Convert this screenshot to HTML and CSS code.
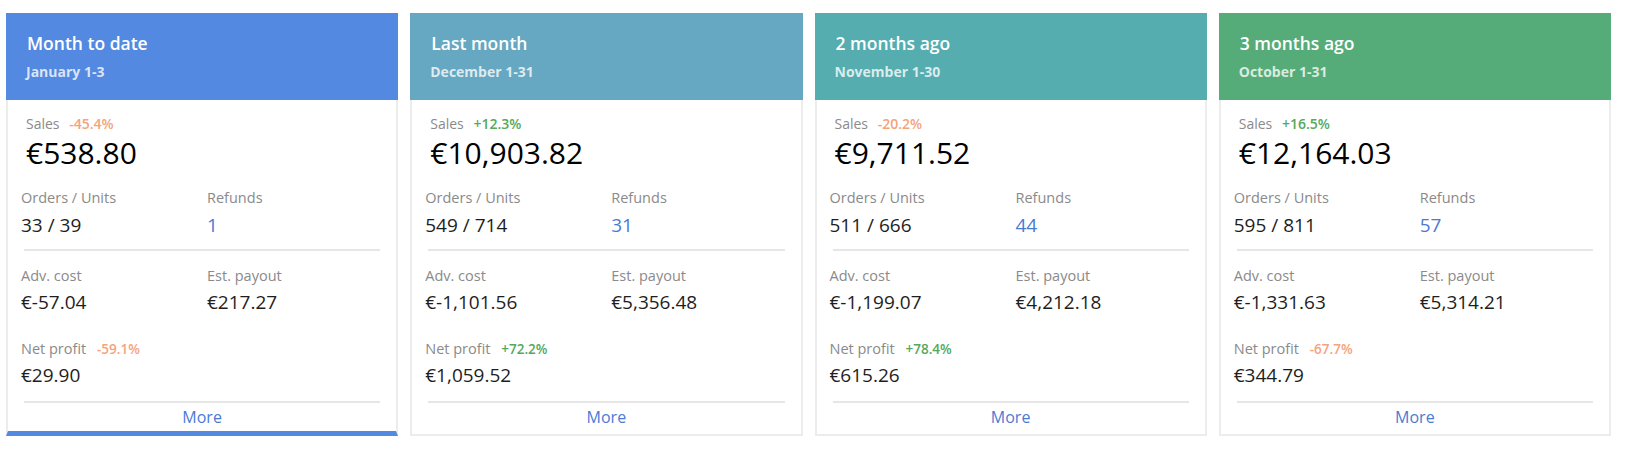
FILE: index.html
```html
<!DOCTYPE html>
<html>
<head>
<meta charset="utf-8">
<link rel="stylesheet" href="styles.css">
</head>
<body>
<div class="cards">
  <div class="card active">
    <div class="head h1">
      <div class="title">Month to date</div>
      <div class="sub">January 1-3</div>
    </div>
    <div class="body">
      <div class="sales">
        <div class="lbl">Sales <span class="chg neg">-45.4%</span></div>
        <div class="big">€538.80</div>
      </div>
      <div class="grid sep first">
        <div><div class="lbl">Orders / Units</div><div class="val">33 / 39</div></div>
        <div><div class="lbl">Refunds</div><div class="val link">1</div></div>
      </div>
      <div class="grid sep second">
        <div><div class="lbl">Adv. cost</div><div class="val">€-57.04</div></div>
        <div><div class="lbl">Est. payout</div><div class="val">€217.27</div></div>
        <div class="net"><div class="lbl">Net profit <span class="chg small neg">-59.1%</span></div><div class="val">€29.90</div></div>
      </div>
      <div class="more">More</div>
    </div>
  </div>
  <div class="card">
    <div class="head h2">
      <div class="title">Last month</div>
      <div class="sub">December 1-31</div>
    </div>
    <div class="body">
      <div class="sales">
        <div class="lbl">Sales <span class="chg pos">+12.3%</span></div>
        <div class="big">€10,903.82</div>
      </div>
      <div class="grid sep first">
        <div><div class="lbl">Orders / Units</div><div class="val">549 / 714</div></div>
        <div><div class="lbl">Refunds</div><div class="val link">31</div></div>
      </div>
      <div class="grid sep second">
        <div><div class="lbl">Adv. cost</div><div class="val">€-1,101.56</div></div>
        <div><div class="lbl">Est. payout</div><div class="val">€5,356.48</div></div>
        <div class="net"><div class="lbl">Net profit <span class="chg small pos">+72.2%</span></div><div class="val">€1,059.52</div></div>
      </div>
      <div class="more">More</div>
    </div>
  </div>
  <div class="card">
    <div class="head h3">
      <div class="title">2 months ago</div>
      <div class="sub">November 1-30</div>
    </div>
    <div class="body">
      <div class="sales">
        <div class="lbl">Sales <span class="chg neg">-20.2%</span></div>
        <div class="big">€9,711.52</div>
      </div>
      <div class="grid sep first">
        <div><div class="lbl">Orders / Units</div><div class="val">511 / 666</div></div>
        <div><div class="lbl">Refunds</div><div class="val link">44</div></div>
      </div>
      <div class="grid sep second">
        <div><div class="lbl">Adv. cost</div><div class="val">€-1,199.07</div></div>
        <div><div class="lbl">Est. payout</div><div class="val">€4,212.18</div></div>
        <div class="net"><div class="lbl">Net profit <span class="chg small pos">+78.4%</span></div><div class="val">€615.26</div></div>
      </div>
      <div class="more">More</div>
    </div>
  </div>
  <div class="card">
    <div class="head h4">
      <div class="title">3 months ago</div>
      <div class="sub">October 1-31</div>
    </div>
    <div class="body">
      <div class="sales">
        <div class="lbl">Sales <span class="chg pos">+16.5%</span></div>
        <div class="big">€12,164.03</div>
      </div>
      <div class="grid sep first">
        <div><div class="lbl">Orders / Units</div><div class="val">595 / 811</div></div>
        <div><div class="lbl">Refunds</div><div class="val link">57</div></div>
      </div>
      <div class="grid sep second">
        <div><div class="lbl">Adv. cost</div><div class="val">€-1,331.63</div></div>
        <div><div class="lbl">Est. payout</div><div class="val">€5,314.21</div></div>
        <div class="net"><div class="lbl">Net profit <span class="chg small neg">-67.7%</span></div><div class="val">€344.79</div></div>
      </div>
      <div class="more">More</div>
    </div>
  </div>
</div>
</body>
</html>
```
FILE: styles.css
```css
html, body {
  margin: 0;
  padding: 0;
  background: #ffffff;
}
body {
  font-family: "Open Sans", "Liberation Sans", sans-serif;
  color: #222;
}
.cards {
  display: grid;
  grid-template-columns: repeat(4, 1fr);
  gap: 12px;
  width: 1605px;
  padding: 13px 0 0 6px;
  align-items: start;
}
.card {
  display: flex;
  flex-direction: column;
}
.head {
  height: 87px;
  box-sizing: border-box;
  padding: 18px 20px 0 20px;
  color: #fff;
}
.h1 { background: #5389e1; }
.h2 { background: #66a7c1; }
.h3 { background: #55adaf; }
.h4 { background: #56ac78; }
.title {
  font-size: 17.5px;
  font-weight: 600;
  line-height: 24px;
  padding-left: 1px;
}
.sub {
  font-size: 14px;
  font-weight: 700;
  line-height: 18px;
  margin-top: 8px;
  color: rgba(255, 255, 255, 0.78);
}
.body {
  border: 2px solid #ececec;
  border-top: 0;
  padding: 14px 13px 7px 13px;
}
.card.active .body {
  border-bottom: 5px solid #5389e1;
  padding-bottom: 4px;
}
.sales {
  padding-left: 5px;
}
.lbl {
  font-size: 14.5px;
  line-height: 20px;
  color: #8a8a8a;
  white-space: nowrap;
}
.sales .lbl {
  font-size: 14px;
}
.chg {
  font-size: 14px;
  font-weight: 600;
  margin-left: 6px;
}
.chg.small {
  font-size: 13.5px;
  margin-left: 7px;
}
.neg { color: #f5a37c; }
.pos { color: #55a95b; }
.big {
  font-size: 30px;
  font-weight: 500;
  line-height: 38px;
  color: #000;
}
.grid {
  display: grid;
  grid-template-columns: 186px 1fr;
  margin-top: 16px;
}
.sep {
  padding-bottom: 11px;
  border-bottom: 2px solid #e6e6e6;
  margin-left: 3px;
  margin-right: 3px;
}
.grid > div {
  margin-left: -3px;
}
.second {
  margin-top: 0;
  padding-top: 15px;
  padding-bottom: 13px;
}
.net {
  grid-column: 1 / 3;
  margin-top: 24px;
}
.val {
  font-size: 19px;
  line-height: 26px;
  margin-top: 3px;
  color: #1e1e1e;
}
.first .val {
  margin-top: 4px;
}
.link {
  color: #4a7bd4;
}
.more {
  margin-top: 4px;
  text-align: center;
  font-size: 16px;
  line-height: 20px;
  color: #4a7bd4;
}
```
